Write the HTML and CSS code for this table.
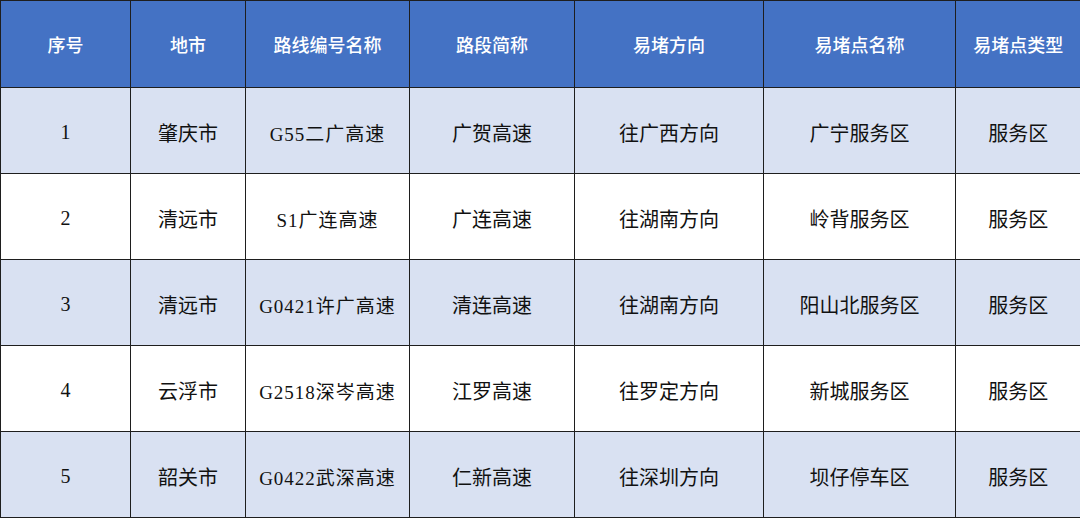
FILE: index.html
```html
<!DOCTYPE html>
<html lang="zh">
<head>
<meta charset="utf-8">
<title>易堵点</title>
<link rel="stylesheet" href="styles.css">
</head>
<body>
<table class="grid">
  <colgroup>
    <col class="c1"><col class="c2"><col class="c3"><col class="c4"><col class="c5"><col class="c6"><col class="c7">
  </colgroup>
  <thead>
    <tr class="head">
      <th>序号</th><th>地市</th><th>路线编号名称</th><th>路段简称</th><th>易堵方向</th><th>易堵点名称</th><th>易堵点类型</th>
    </tr>
  </thead>
  <tbody>
    <tr class="shade">
      <td>1</td><td>肇庆市</td><td class="route">G55二广高速</td><td>广贺高速</td><td>往广西方向</td><td>广宁服务区</td><td>服务区</td>
    </tr>
    <tr>
      <td>2</td><td>清远市</td><td class="route">S1广连高速</td><td>广连高速</td><td>往湖南方向</td><td>岭背服务区</td><td>服务区</td>
    </tr>
    <tr class="shade">
      <td>3</td><td>清远市</td><td class="route">G0421许广高速</td><td>清连高速</td><td>往湖南方向</td><td>阳山北服务区</td><td>服务区</td>
    </tr>
    <tr>
      <td>4</td><td>云浮市</td><td class="route">G2518深岑高速</td><td>江罗高速</td><td>往罗定方向</td><td>新城服务区</td><td>服务区</td>
    </tr>
    <tr class="shade">
      <td>5</td><td>韶关市</td><td class="route">G0422武深高速</td><td>仁新高速</td><td>往深圳方向</td><td>坝仔停车区</td><td>服务区</td>
    </tr>
  </tbody>
</table>
</body>
</html>
```

FILE: styles.css
```css
html, body {
  margin: 0;
  padding: 0;
  background: #ffffff;
}

.grid {
  width: 1080px;
  table-layout: fixed;
  border-collapse: collapse;
  font-family: "Liberation Serif", "Noto Sans CJK SC", serif;
  color: #111111;
}

.c1 { width: 130px; }
.c2 { width: 115px; }
.c3 { width: 164px; }
.c4 { width: 165px; }
.c5 { width: 189px; }
.c6 { width: 192px; }
.c7 { width: 125px; }

.grid th,
.grid td {
  border: 1px solid #1e1e1e;
  text-align: center;
  vertical-align: middle;
  padding: 0;
}

.grid th:last-child,
.grid td:last-child {
  border-right: none;
}

.head {
  height: 87px;
  background: #4472c4;
}

.head th {
  color: #ffffff;
  font-family: "Noto Sans CJK SC", sans-serif;
  font-weight: 500;
  font-size: 18px;
}

.grid tbody tr {
  height: 86px;
}

.grid td {
  font-size: 20px;
  padding-top: 3px;
}

.grid td.route {
  font-size: 19px;
  letter-spacing: 1px;
}

.shade {
  background: #d9e1f2;
}
```
